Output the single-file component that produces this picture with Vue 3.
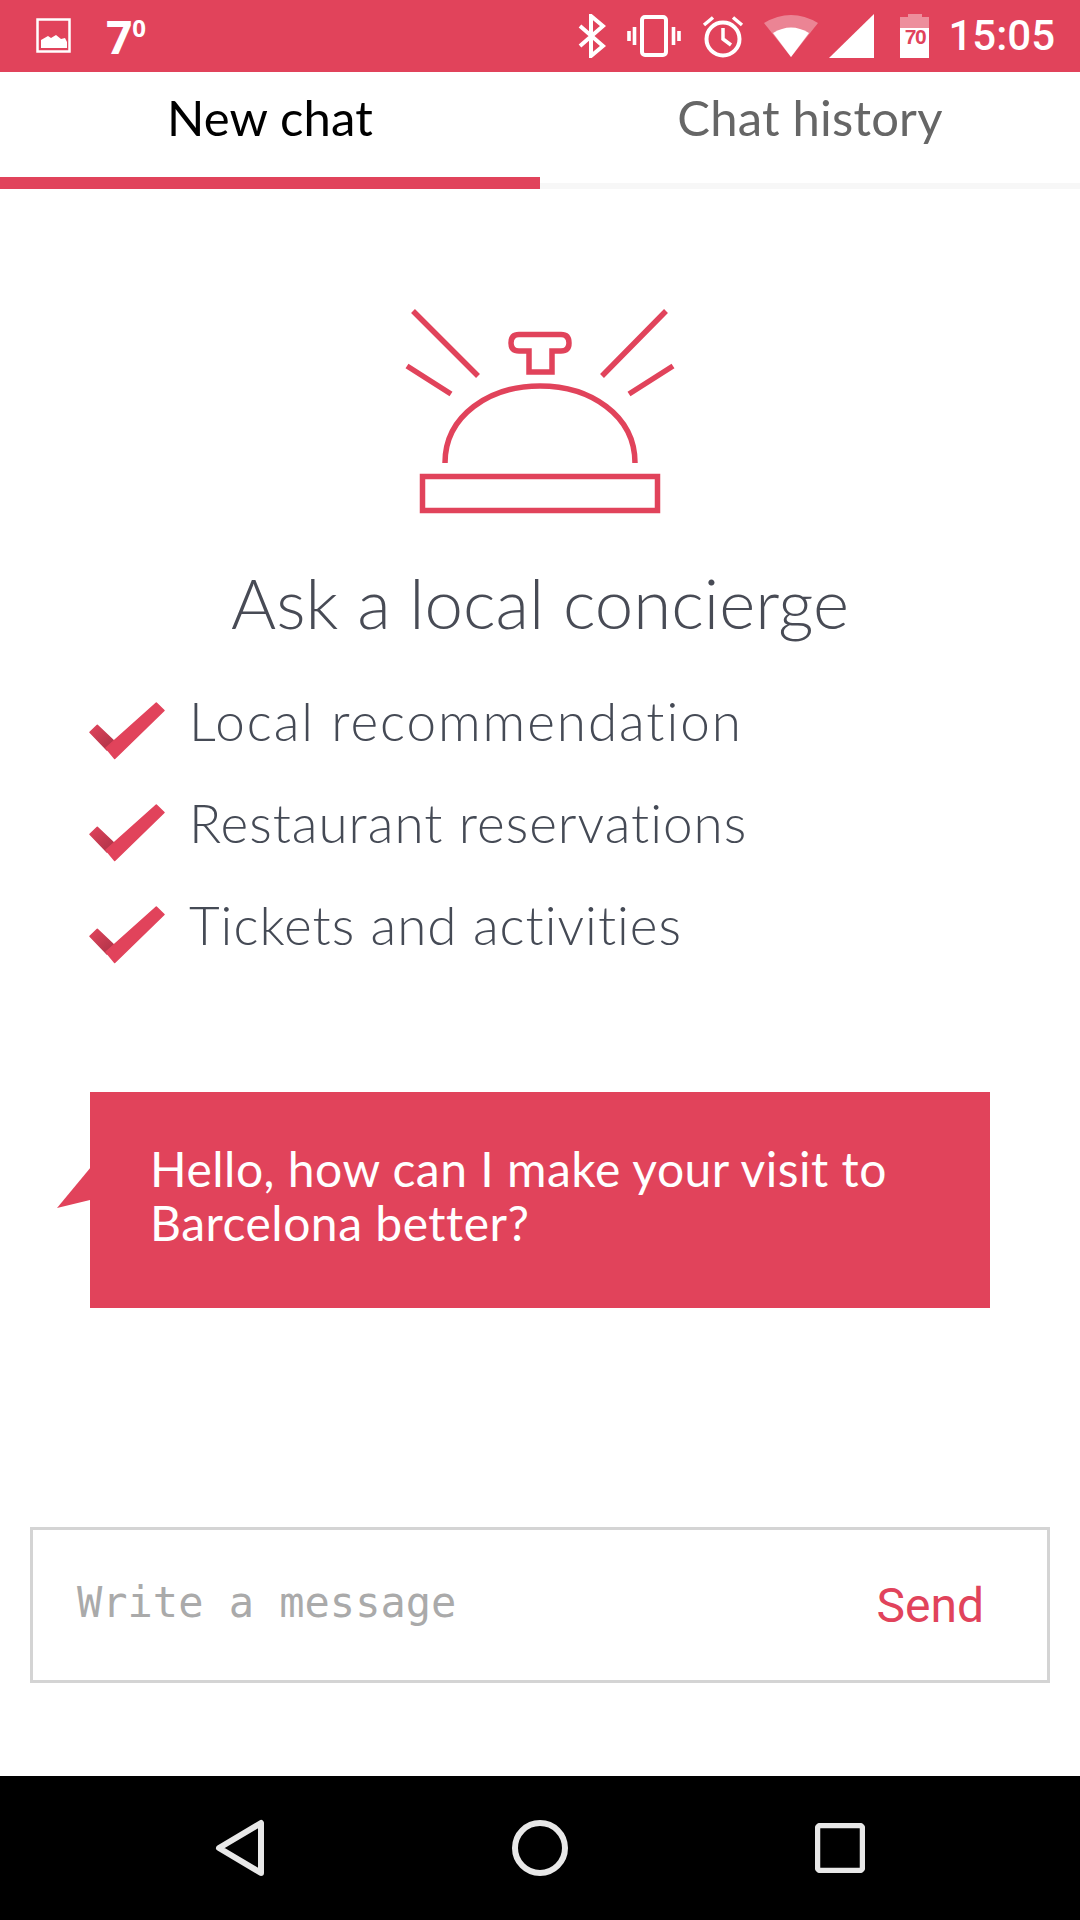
<script setup>
const items = [
  { text: 'Local recommendation', spacing: 1.95 },
  { text: 'Restaurant reservations', spacing: 1 },
  { text: 'Tickets and activities', spacing: 1 }
]
</script>

<template>
  <div class="screen">
    <header class="status">
      <svg class="ic-image" width="36" height="36" viewBox="0 0 36 36">
        <rect x="1.5" y="1.5" width="32" height="32" fill="none" stroke="#fff" stroke-width="2.5" />
        <path d="M5 30V22L12 18L15 20L20 17L25 21L29 20L31 24V30Z" fill="#fff" />
      </svg>
      <span class="temp">7<sup>0</sup></span>
      <span class="spacer"></span>
      <svg class="ic-bt" width="28" height="44" viewBox="0 0 28 44">
        <path d="M2 12L25 32L13 42V2L25 12L2 32" fill="none" stroke="#fff" stroke-width="4" />
      </svg>
      <svg class="ic-vib" width="54" height="42" viewBox="0 0 54 42">
        <rect x="15" y="2" width="24" height="38" rx="3" fill="none" stroke="#fff" stroke-width="4" />
        <path d="M7.5 12V30M2 16V26M46.500 12V30M52 16V26" stroke="#fff" stroke-width="3.600" fill="none" />
      </svg>
      <svg class="ic-alarm" width="42" height="44" viewBox="0 0 42 44">
        <circle cx="21" cy="25" r="16.500" fill="none" stroke="#fff" stroke-width="4" />
        <path d="M21 14V25L29 31M2 11L11 3.500M40 11L31 3.500" fill="none" stroke="#fff" stroke-width="3.500" />
      </svg>
      <svg class="ic-wifi" width="54" height="44" viewBox="0 0 54 44">
        <path d="M0 9Q27 -7 54 9L27 43Z" fill="#fff" fill-opacity=".35" />
        <path d="M9 19Q27 8 45 19L27 43Z" fill="#fff" />
      </svg>
      <svg class="ic-signal" width="46" height="44" viewBox="0 0 46 44">
        <path d="M45 0V44H0Z" fill="#fff" />
      </svg>
      <div class="battery">
        <span class="bat-cap"></span>
        <span class="bat-top"></span>
        <span class="bat-level">70</span>
      </div>
      <span class="clock">15:05</span>
    </header>

    <nav class="tabs">
      <div class="tab active">New chat</div>
      <div class="tab">Chat history</div>
    </nav>

    <main class="main">
      <svg class="bell" width="280" height="215" viewBox="0 0 280 215">
        <g fill="none" stroke="#e1435b" stroke-width="5.500">
          <path d="M13 11L78 76M7 66L51 94" />
          <path d="M266 11L202 76M273 66L229 94" />
          <path d="M129 72V51H119Q111 51 111 43Q111 34.500 119 34.500H161Q169 34.500 169 43Q169 51 161 51H152V72Z" />
          <path d="M45 163C45 115 90 86 140 86C190 86 235 115 235 163" />
          <rect x="22.500" y="176.500" width="235" height="34" />
        </g>
      </svg>

      <h1 class="title">Ask a local concierge</h1>

      <ul class="list">
        <li v-for="item in items" :key="item.text" class="row">
          <svg class="check" width="76" height="58" viewBox="0 0 76 58">
            <defs>
              <linearGradient id="arm" x1="0" y1="0" x2="1" y2="1">
                <stop offset="0" stop-color="#e1435b" />
                <stop offset="1" stop-color="#a83246" />
              </linearGradient>
            </defs>
            <path d="M1 30.300L8.300 23.300L27 41L18 48Z" fill="url(#arm)" stroke="url(#arm)" stroke-width="1.500" stroke-linejoin="round" />
            <path d="M67.300 1L75 8.500L25.700 56.500L17 46Z" fill="#e1435b" stroke="#e1435b" stroke-width="1.500" stroke-linejoin="round" />
          </svg>
          <span class="label" :style="{ letterSpacing: item.spacing + 'px' }">{{ item.text }}</span>
        </li>
      </ul>

      <div class="bubble">
        <span class="tail"></span>
        <p class="bubble-text">Hello, how can I make your visit to Barcelona better?</p>
      </div>

      <div class="composer">
        <span class="placeholder">Write a message</span>
        <span class="send">Send</span>
      </div>
    </main>

    <footer class="navbar">
      <svg width="50" height="58" viewBox="0 0 50 58">
        <path d="M46 4V54L4 29Z" fill="none" stroke="#e8e8e8" stroke-width="6" stroke-linejoin="round" />
      </svg>
      <svg width="58" height="58" viewBox="0 0 58 58">
        <circle cx="29" cy="29" r="25" fill="none" stroke="#e8e8e8" stroke-width="6" />
      </svg>
      <svg width="50" height="50" viewBox="0 0 50 50">
        <rect x="2.500" y="2.500" width="45" height="45" rx="3" fill="none" stroke="#e8e8e8" stroke-width="5.500" />
      </svg>
    </footer>
  </div>
</template>

<style>
html, body { margin: 0; background: #fff; }
</style>

<style scoped>
.screen {
  width: 1080px;
  height: 1920px;
  display: flex;
  flex-direction: column;
  background: #fff;
  overflow: hidden;
  font-family: Lato, "Liberation Sans", sans-serif;
}

.status {
  height: 72px;
  flex: none;
  background: #e1435b;
  display: flex;
  align-items: center;
  padding: 0 25px 0 36px;
  box-sizing: border-box;
  color: #fff;
}
.temp {
  margin-left: 34px;
  font-family: "Open Sans", sans-serif;
  font-weight: 700;
  font-size: 46px;
  line-height: 72px;
}
.temp sup {
  font-size: 24px;
  line-height: 0;
  vertical-align: 17px;
}
.spacer { flex: 1; }
.ic-vib { margin-left: 21px; }
.ic-alarm { margin-left: 21px; }
.ic-wifi { margin-left: 20px; }
.ic-signal { margin-left: 11px; }
.battery {
  margin-left: 25px;
  width: 29px;
  height: 44px;
  position: relative;
  display: flex;
  flex-direction: column;
  align-items: center;
}
.bat-cap { width: 14px; height: 3px; background: rgba(255,255,255,.4); flex: none; }
.bat-top { width: 29px; height: 11px; background: rgba(255,255,255,.4); flex: none; }
.bat-level {
  width: 29px;
  flex: 1;
  background: #fff;
  color: #e1435b;
  font: 700 21px/18px "Liberation Sans", sans-serif;
  text-align: center;
  letter-spacing: -1.5px;
}
.clock {
  margin-left: 19px;
  font-family: Roboto, sans-serif;
  font-weight: 500;
  font-size: 42px;
  line-height: 72px;
}

.tabs {
  display: flex;
  height: 117px;
  flex: none;
  box-sizing: border-box;
}
.tab {
  width: 540px;
  box-sizing: border-box;
  text-align: center;
  font-size: 49px;
  letter-spacing: 0.2px;
  line-height: 90px;
  color: #666;
  border-bottom: 6px solid #f7f7f7;
}
.tab.active {
  color: #000;
  border-bottom: 12px solid #e1435b;
}

.main {
  flex: 1;
  display: flex;
  flex-direction: column;
  align-items: center;
  position: relative;
}
.bell { margin-top: 111px; flex: none; }
.title {
  margin: 46px 0 0;
  font-weight: 300;
  font-size: 69px;
  line-height: 84px;
  color: #484b55;
}
.list {
  list-style: none;
  margin: 29px 0 0;
  padding: 0 0 0 89px;
  align-self: stretch;
}
.row {
  display: flex;
  height: 102px;
  align-items: center;
}
.check { flex: none; margin-top: 12px; }
.label {
  margin-left: 24px;
  font-weight: 300;
  font-size: 53px;
  color: #454a55;
  margin-top: -10px;
}
.bubble {
  margin-top: 112px;
  width: 900px;
  height: 216px;
  box-sizing: border-box;
  background: #e1435b;
  position: relative;
  padding: 50px 60px 0 60px;
  flex: none;
}
.tail {
  position: absolute;
  left: -33px;
  top: 75px;
  width: 34px;
  height: 41px;
  background: #e1435b;
  clip-path: polygon(100% 0, 0 100%, 100% 80%);
}
.bubble-text {
  margin: 0;
  color: #fff;
  font-size: 48px;
  letter-spacing: 0.5px;
  line-height: 54px;
}
.composer {
  margin-top: 219px;
  width: 1020px;
  height: 156px;
  box-sizing: border-box;
  border: 3px solid #d4d4d4;
  display: flex;
  align-items: center;
  justify-content: space-between;
  padding: 0 63px 0 44px;
  flex: none;
}
.placeholder {
  font-family: "DejaVu Sans Mono", monospace;
  font-size: 42px;
  color: #aaa;
  margin-top: -6px;
}
.send {
  font-family: Roboto, sans-serif;
  font-size: 48px;
  color: #e1435b;
}

.navbar {
  height: 144px;
  flex: none;
  background: #000;
  display: flex;
  align-items: center;
  padding: 0 215px 0 215px;
  justify-content: space-between;
  box-sizing: border-box;
}
</style>
